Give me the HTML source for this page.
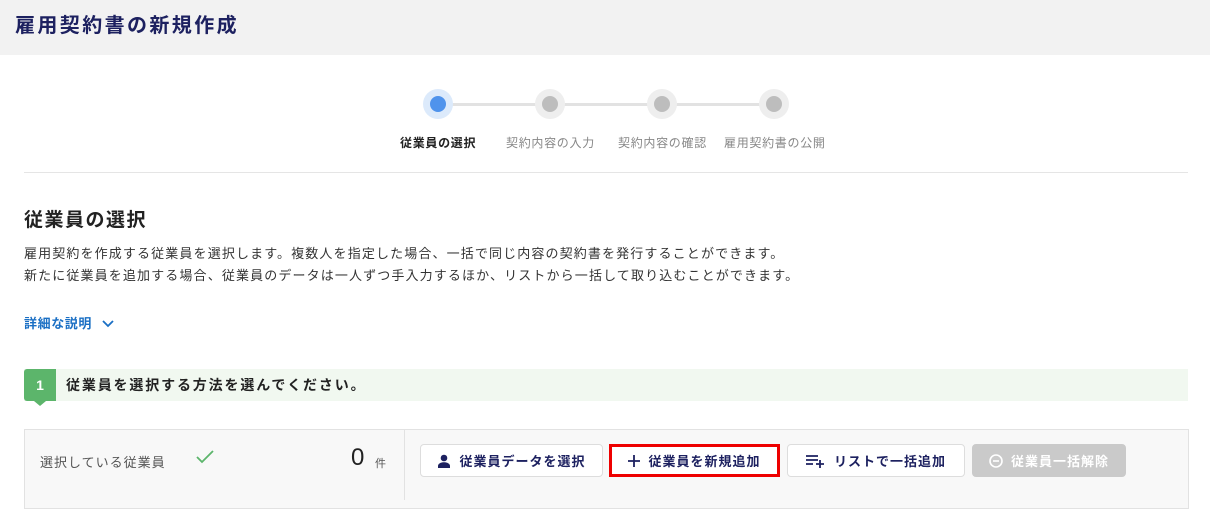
<!DOCTYPE html>
<html><head><meta charset="utf-8"><style>
*{box-sizing:border-box;margin:0;padding:0}
body{width:1210px;height:499px;overflow:hidden;background:#fff;font-family:"Liberation Sans","Noto Sans CJK JP",sans-serif;color:#333;position:relative}
.abs{position:absolute}
.hdr{left:0;top:0;width:1210px;height:55px;background:#f2f2f2}
.hdr h1{position:absolute;left:15px;top:9px;font-size:20px;font-weight:bold;color:#1d2160;letter-spacing:2.4px}
.line{height:3px;background:#e2e2e2;top:103px}
.c{width:30px;height:30px;border-radius:50%;background:#eee;top:89px}
.c i{position:absolute;left:7px;top:7px;width:16px;height:16px;border-radius:50%;background:#bdbdbd}
.c.on{background:#dceafb}.c.on i{background:#4f93ec}
.lb{top:134px;font-size:12px;color:#888;white-space:nowrap;letter-spacing:0.7px}
.btn{top:444px;height:33px;background:#fff;border:1px solid #ddd;border-radius:4px;font-size:13px;letter-spacing:1px;font-weight:bold;color:#1d2160;display:flex;align-items:center;justify-content:center;gap:8px;white-space:nowrap}
</style></head><body>
<div class="abs hdr"><h1>雇用契約書の新規作成</h1></div>
<div class="abs line" style="left:438px;width:336px"></div>
<div class="abs c on" style="left:423px"><i></i></div>
<div class="abs c" style="left:535px"><i></i></div>
<div class="abs c" style="left:647px"><i></i></div>
<div class="abs c" style="left:759px"><i></i></div>
<div class="abs lb" style="left:400px;color:#222;font-weight:bold">従業員の選択</div>
<div class="abs lb" style="left:506px">契約内容の入力</div>
<div class="abs lb" style="left:618px">契約内容の確認</div>
<div class="abs lb" style="left:724px">雇用契約書の公開</div>
<div class="abs" style="left:24px;top:172px;width:1164px;height:1px;background:#e5e5e5"></div>
<div class="abs" style="left:24px;top:205px;font-size:19px;font-weight:bold;color:#222;letter-spacing:1.5px">従業員の選択</div>
<div class="abs" style="left:24px;top:243px;font-size:13px;line-height:22px;color:#333;letter-spacing:1.13px;white-space:nowrap">雇用契約を作成する従業員を選択します。複数人を指定した場合、一括で同じ内容の契約書を発行することができます。<br>新たに従業員を追加する場合、従業員のデータは一人ずつ手入力するほか、リストから一括して取り込むことができます。</div>
<div class="abs" style="left:24px;top:313px;font-size:13px;font-weight:bold;color:#1a6fc4;letter-spacing:0.6px">詳細な説明 <svg width="12" height="8" viewBox="0 0 12 8" style="margin-left:6px"><path d="M1 1l5 5 5-5" fill="none" stroke="#1a6fc4" stroke-width="1.8"/></svg></div>
<div class="abs" style="left:24px;top:369px;width:1164px;height:32px;background:#f1f8f0"></div>
<div class="abs" style="left:24px;top:369px;width:32px;height:32px;background:#5cb56b;border-radius:3px 0 0 3px;color:#fff;font-weight:bold;font-size:14px;text-align:center;line-height:32px">1</div>
<div class="abs" style="left:34px;top:401px;width:0;height:0;border-left:6px solid transparent;border-right:6px solid transparent;border-top:5px solid #5cb56b"></div>
<div class="abs" style="left:66px;top:375px;font-size:14px;font-weight:bold;color:#222;letter-spacing:1.85px;white-space:nowrap">従業員を選択する方法を選んでください。</div>
<div class="abs" style="left:24px;top:429px;width:1165px;height:80px;background:#f8f8f8;border:1px solid #e2e2e2"></div>
<div class="abs" style="left:404px;top:430px;width:1px;height:70px;background:#e2e2e2"></div>
<div class="abs" style="left:40px;top:452px;font-size:13px;color:#555;letter-spacing:1px">選択している従業員</div>
<svg class="abs" style="left:196px;top:450px" width="18" height="14" viewBox="0 0 18 14"><path d="M1 7l5 5L17 1" fill="none" stroke="#5cb56b" stroke-width="1.8"/></svg>
<div class="abs" style="left:351px;top:444px;font-size:24px;color:#222">0</div>
<div class="abs" style="left:375px;top:455px;font-size:11px;color:#555">件</div>
<div class="abs btn" style="left:420px;width:183px"><svg width="14" height="14" viewBox="0 0 14 14"><circle cx="7" cy="4" r="3.3" fill="#1d2160"/><path d="M1 14v-2c0-2.5 3-3.8 6-3.8s6 1.3 6 3.8v2z" fill="#1d2160"/></svg>従業員データを選択</div>
<div class="abs btn" style="left:609px;width:171px;border:3px solid #e00;border-radius:0"><svg width="12" height="12" viewBox="0 0 12 12"><path d="M6 0v12M0 6h12" stroke="#1d2160" stroke-width="1.8"/></svg>従業員を新規追加</div>
<div class="abs btn" style="left:787px;width:178px"><svg width="20" height="14" viewBox="0 0 20 14"><path d="M0 2h12M0 6h12M0 10h7M14 6v8M10 10h8" stroke="#1d2160" stroke-width="1.8"/></svg>リストで一括追加</div>
<div class="abs btn" style="left:972px;width:154px;background:#cacaca;border-color:#cacaca;color:#fff"><svg width="14" height="14" viewBox="0 0 14 14"><circle cx="7" cy="7" r="6" fill="none" stroke="#fff" stroke-width="1.6"/><path d="M4 7h6" stroke="#fff" stroke-width="1.6"/></svg>従業員一括解除</div>
</body></html>
